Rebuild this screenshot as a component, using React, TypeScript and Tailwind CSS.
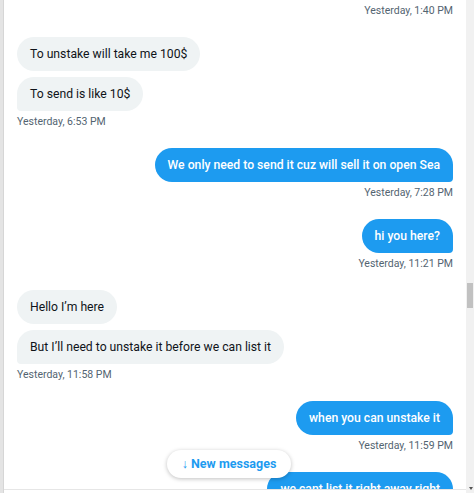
import React from "react";

type Msg = { side: "l" | "r"; text: string; last?: boolean };

const font = { fontFamily: "Roboto, 'Noto Sans', sans-serif" };

function Bubble({ side, text, last }: Msg) {
  if (side === "l") {
    return (
      <div className="flex justify-start">
        <div
          className={`bg-[#eff3f4] text-[#0f1419] text-[12.2px] leading-[18px] px-[13px] py-[8px] rounded-[17px] ${last ? "rounded-bl-[4px]" : ""}`}
        >
          {text}
        </div>
      </div>
    );
  }
  return (
    <div className="flex justify-end">
      <div
        className={`bg-[#1d9bf0] text-white font-medium text-[12.2px] leading-[18px] px-[13px] py-[8px] rounded-[17px] ${last ? "rounded-br-[4px]" : ""}`}
      >
        {text}
      </div>
    </div>
  );
}

function Stamp({ side, text }: { side: "l" | "r"; text: string }) {
  return (
    <div
      className={`mt-[3px] mb-[18px] h-[16px] leading-[16px] text-[10.5px] text-[#536471] ${side === "r" ? "text-right" : "text-left"}`}
    >
      {text}
    </div>
  );
}

export default function App() {
  return (
    <div className="w-[474px] h-[493px] bg-white flex overflow-hidden" style={font}>
      <div className="w-[4px] h-full bg-[#e4e4e4] border-r border-[#d6d6d6]" />
      <div className="flex-1 flex flex-col">
        <div className="relative h-[489px] overflow-hidden">
          <div className="px-[13px]">
            <Stamp side="r" text="Yesterday, 1:40 PM" />
            <div className="flex flex-col gap-[6px]">
              <Bubble side="l" text="To unstake will take me 100$" />
              <Bubble side="l" text="To send is like 10$" last />
            </div>
            <Stamp side="l" text="Yesterday, 6:53 PM" />
            <Bubble side="r" text="We only need to send it cuz will sell it on open Sea" last />
            <Stamp side="r" text="Yesterday, 7:28 PM" />
            <Bubble side="r" text="hi you here?" last />
            <Stamp side="r" text="Yesterday, 11:21 PM" />
            <div className="flex flex-col gap-[6px]">
              <Bubble side="l" text="Hello I’m here" />
              <Bubble side="l" text="But I’ll need to unstake it before we can list it" last />
            </div>
            <Stamp side="l" text="Yesterday, 11:58 PM" />
            <Bubble side="r" text="when you can unstake it" last />
            <Stamp side="r" text="Yesterday, 11:59 PM" />
            <Bubble side="r" text="we cant list it right away right" last />
          </div>
          <div className="absolute left-[163px] top-[450px] h-[28px] w-[124px] rounded-full bg-white shadow-[0_1px_4px_rgba(0,0,0,0.25)] flex items-center justify-center text-[#1d9bf0] font-bold text-[12.5px]">
            ↓ New messages
          </div>
        </div>
        <div className="flex-1 border-t border-[#e6e6e6]" />
      </div>
      <div className="w-[8px] h-full bg-[#f1f1f1] relative">
        <div className="absolute left-[1px] top-[283px] w-[6px] h-[25px] bg-[#c1c1c1]" />
        <div className="absolute left-[3px] top-[487px] w-0 h-0 border-l-[2px] border-r-[2px] border-t-[3px] border-l-transparent border-r-transparent border-t-[#555]" />
      </div>
    </div>
  );
}
